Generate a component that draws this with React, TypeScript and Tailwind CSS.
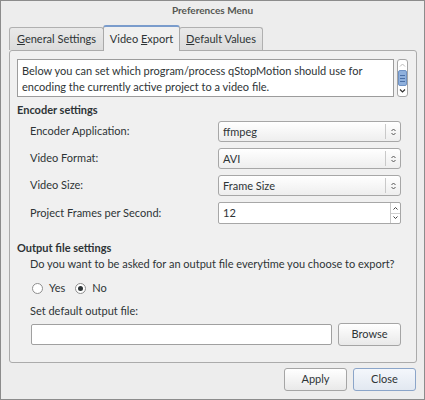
import React from "react";

const font = { fontFamily: 'Lato, "Noto Sans", sans-serif' };

function UpDown() {
  return (
    <svg width="7" height="10" viewBox="0 0 7 10" className="block">
      <path d="M1.5 4 L3.5 2 L5.5 4" fill="none" stroke="#555" strokeWidth="1" />
      <path d="M1.5 6 L3.5 8 L5.5 6" fill="none" stroke="#555" strokeWidth="1" />
    </svg>
  );
}

function Combo({ value }: { value: string }) {
  return (
    <div className="w-[183px] h-[21px] flex items-center rounded-[3px] border border-[#a7a7a7] bg-gradient-to-b from-[#ffffff] to-[#eeeeee]">
      <span className="flex-1 pl-[4px] text-[11px] text-[#2e3436] leading-none whitespace-nowrap">{value}</span>
      <div className="w-px h-[15px] bg-[#c9c9c9]" />
      <div className="w-[14px] flex justify-center">
        <UpDown />
      </div>
    </div>
  );
}

function Row({ label, children }: { label: string; children: React.ReactNode }) {
  return (
    <div className="flex items-center">
      <div className="w-[201px] pl-[13px] text-[11px] text-[#2e3436] whitespace-nowrap">{label}</div>
      {children}
    </div>
  );
}

function Radio({ checked }: { checked?: boolean }) {
  return (
    <div className="w-[11px] h-[11px] rounded-full border border-[#8e8e8e] bg-white flex items-center justify-center">
      {checked && <div className="w-[5px] h-[5px] rounded-full bg-[#2e3436]" />}
    </div>
  );
}

export default function App() {
  return (
    <div
      className="w-[425px] h-[400px] border border-[#8c8c8c] bg-[#ededed] flex flex-col text-[#2e3436] whitespace-nowrap"
      style={font}
    >
      {/* title */}
      <div className="h-[19px] flex items-center justify-center text-[10px] font-bold text-[#555753]">
        Preferences Menu
      </div>
      {/* tabs */}
      <div className="h-[30px] pl-[8px] flex items-end">
        <div className="h-[23px] w-[95px] border border-b-0 border-[#b0b0b0] rounded-t-[3px] bg-gradient-to-b from-[#e9e9e9] to-[#dcdcdc] flex items-center justify-center text-[11px]">
          <span><span className="underline">G</span>eneral Settings</span>
        </div>
        <div className="relative z-10 -mb-px h-[26px] w-[77px] -ml-px border border-b-0 border-[#a9a9a9] border-t-[#7a9ccc] border-t-2 rounded-t-[3px] bg-[#f0f0f0] flex items-center justify-center text-[11px]">
          <span>Video <span className="underline">E</span>xport</span>
        </div>
        <div className="h-[23px] w-[84px] -ml-px border border-b-0 border-[#b0b0b0] rounded-t-[3px] bg-gradient-to-b from-[#e9e9e9] to-[#dcdcdc] flex items-center justify-center text-[11px]">
          <span><span className="underline">D</span>efault Values</span>
        </div>
      </div>
      {/* pane */}
      <div className="ml-[8px] w-[408px] h-[313px] border border-[#ababab] rounded-[3px] bg-[#f0f0f0] px-[7px] pt-[8px] flex flex-col">
        <div className="flex">
          <div className="w-[377px] h-[38px] border border-[#9c9c9c] bg-white px-[4px] pt-[3px] text-[11px] leading-[16px] whitespace-normal">
            Below you can set which program/process qStopMotion should use for encoding the currently active project to a video file.
          </div>
          <div className="ml-[3px] w-[11px] h-[38px] rounded-[3px] border border-[#a5a5a5] bg-white flex flex-col items-center">
            <svg width="9" height="9" viewBox="0 0 9 9" className="mt-[1px]">
              <path d="M2 5.5 L4.5 3 L7 5.5" fill="none" stroke="#bbbbbb" strokeWidth="1" />
            </svg>
            <div className="w-[9px] h-[16px] rounded-[2px] bg-[#8fb0dc] border border-[#6f92c4] flex flex-col items-center justify-center gap-[2px]">
              <div className="w-[5px] h-px bg-[#4a6fa5]" />
              <div className="w-[5px] h-px bg-[#4a6fa5]" />
              <div className="w-[5px] h-px bg-[#4a6fa5]" />
            </div>
            <svg width="9" height="9" viewBox="0 0 9 9">
              <path d="M2 3.5 L4.5 6 L7 3.5" fill="none" stroke="#333333" strokeWidth="1.2" />
            </svg>
          </div>
        </div>
        <div className="mt-[5px] h-[16px] leading-[16px] text-[11px] font-bold">Encoder settings</div>
        <div className="mt-[3px] flex flex-col gap-[6px]">
          <Row label="Encoder Application:">
            <Combo value="ffmpeg" />
          </Row>
          <Row label="Video Format:">
            <Combo value="AVI" />
          </Row>
          <Row label="Video Size:">
            <Combo value="Frame Size" />
          </Row>
          <Row label="Project Frames per Second:">
            <div className="w-[183px] h-[22px] flex border border-[#a7a7a7] rounded-[2px] bg-white">
              <span className="flex-1 pl-[4px] text-[11px] flex items-center">12</span>
              <div className="w-[10px] border-l border-[#c8c8c8] flex flex-col">
                <div className="flex-1 flex items-center justify-center border-b border-[#d0d0d0]">
                  <svg width="7" height="6" viewBox="0 0 7 6"><path d="M1.5 4.5 L3.5 2.5 L5.5 4.5" fill="none" stroke="#444" strokeWidth="1" /></svg>
                </div>
                <div className="flex-1 flex items-center justify-center">
                  <svg width="7" height="6" viewBox="0 0 7 6"><path d="M1.5 1.5 L3.5 3.5 L5.5 1.5" fill="none" stroke="#444" strokeWidth="1" /></svg>
                </div>
              </div>
            </div>
          </Row>
        </div>
        <div className="mt-[16px] h-[16px] leading-[16px] text-[11px] font-bold">Output file settings</div>
        <div className="pl-[13px] h-[16px] leading-[16px] text-[11px]">
          Do you want to be asked for an output file everytime you choose to export?
        </div>
        <div className="mt-[8px] pl-[15px] h-[16px] flex items-center text-[11px]">
          <Radio />
          <span className="ml-[6px]">Yes</span>
          <div className="ml-[10px]"><Radio checked /></div>
          <span className="ml-[6px]">No</span>
        </div>
        <div className="mt-[7px] pl-[13px] h-[16px] leading-[16px] text-[11px]">Set default output file:</div>
        <div className="mt-[4px] pl-[14px] flex items-center">
          <div className="w-[301px] h-[21px] border border-[#a0a0a0] rounded-[2px] bg-white" />
          <div className="ml-[6px] w-[63px] h-[23px] border border-[#a5a5a5] rounded-[3px] bg-gradient-to-b from-[#ffffff] to-[#e9e9e9] flex items-center justify-center text-[11px]">
            Browse
          </div>
        </div>
      </div>
      {/* buttons */}
      <div className="mt-[5px] flex justify-end pr-[8px] gap-[6px]">
        <div className="w-[63px] h-[23px] border border-[#a5a5a5] rounded-[3px] bg-gradient-to-b from-[#ffffff] to-[#e9e9e9] flex items-center justify-center text-[11px]">
          Apply
        </div>
        <div className="w-[63px] h-[23px] border border-[#8ba5c9] rounded-[3px] bg-gradient-to-b from-[#f4f7fb] to-[#e2e8f1] flex items-center justify-center text-[11px]">
          Close
        </div>
      </div>
    </div>
  );
}
